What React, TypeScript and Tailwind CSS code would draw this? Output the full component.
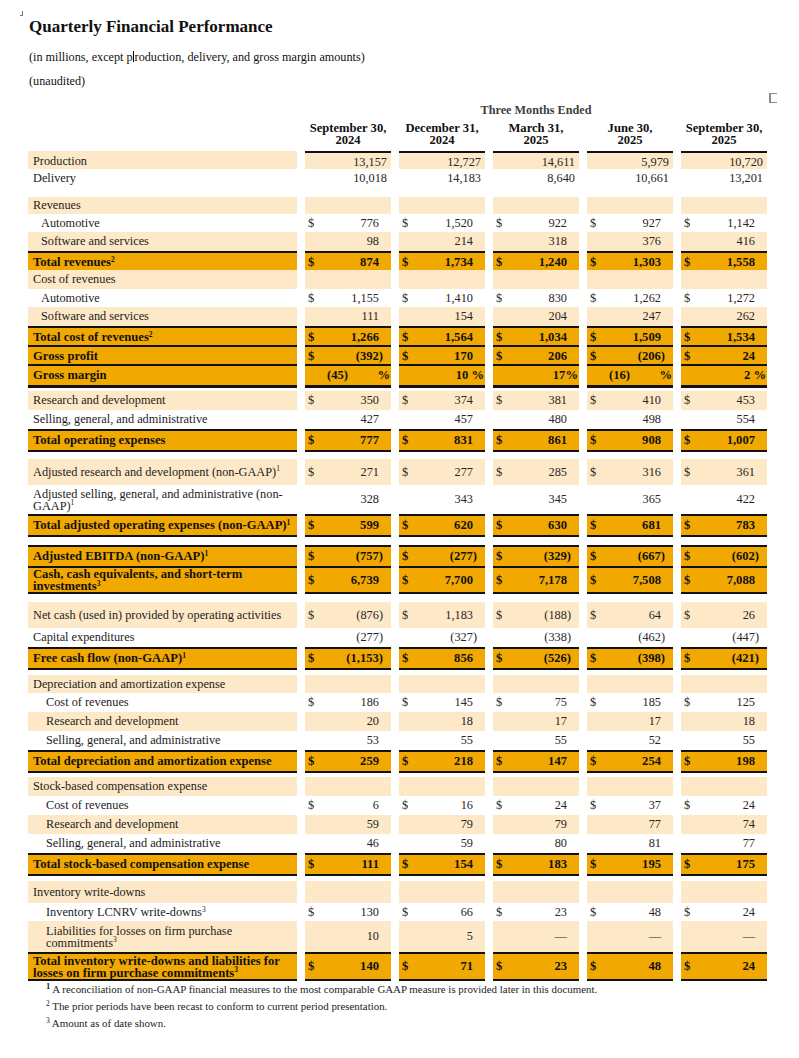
import React from "react"

type Line = {
    label: React.ReactNode
    kind: "light" | "plain" | "total"
    h: string
    ind?: "a" | "b"
    vals?: string[]
    usd?: boolean
    top?: boolean
    bottom?: "thin" | "thick"
    raw?: boolean
    pct?: boolean
    head?: boolean
    multi?: boolean
}

type Row = Line | { spacer: string }

const S = ({n}: { n: string }) => <sup className="text-[7.5px] leading-none top-[-0.6em]">{n}</sup>

const rows: Row[] = [
    {label: "Production", kind: "light", h: "h-[18px]", raw: true, head: true, vals: ["13,157", "12,727", "14,611", "5,979", "10,720"]},
    {label: "Delivery", kind: "plain", h: "h-[18px]", raw: true, vals: ["10,018", "14,183", "8,640", "10,661", "13,201"]},
    {spacer: "h-[10px]"},
    {label: "Revenues", kind: "light", h: "h-[17px]"},
    {label: "Automotive", ind: "a", kind: "plain", h: "h-[18px]", usd: true, vals: ["776", "1,520", "922", "927", "1,142"]},
    {label: "Software and services", ind: "a", kind: "light", h: "h-[19px]", vals: ["98", "214", "318", "376", "416"]},
    {label: <>Total revenues<S n="2"/></>, kind: "total", h: "h-[19px]", usd: true, top: true, bottom: "thin", vals: ["874", "1,734", "1,240", "1,303", "1,558"]},
    {label: "Cost of revenues", kind: "light", h: "h-[19px]"},
    {label: "Automotive", ind: "a", kind: "plain", h: "h-[18px]", usd: true, vals: ["1,155", "1,410", "830", "1,262", "1,272"]},
    {label: "Software and services", ind: "a", kind: "light", h: "h-[19px]", vals: ["111", "154", "204", "247", "262"]},
    {label: <>Total cost of revenues<S n="2"/></>, kind: "total", h: "h-[19px]", usd: true, top: true, vals: ["1,266", "1,564", "1,034", "1,509", "1,534"]},
    {label: "Gross profit", kind: "total", h: "h-[19px]", usd: true, top: true, vals: ["(392)", "170", "206", "(206)", "24"]},
    {label: "Gross margin", kind: "total", h: "h-[19px]", top: true, bottom: "thick", pct: true, vals: ["(45)", "10 %", "17%", "(16)", "2 %"]},
    {spacer: "h-[8px]"},
    {label: "Research and development", kind: "light", h: "h-[19px]", usd: true, vals: ["350", "374", "381", "410", "453"]},
    {label: "Selling, general, and administrative", kind: "plain", h: "h-[19px]", vals: ["427", "457", "480", "498", "554"]},
    {label: "Total operating expenses", kind: "total", h: "h-[20px]", usd: true, top: true, bottom: "thin", vals: ["777", "831", "861", "908", "1,007"]},
    {spacer: "h-[10px]"},
    {label: <>Adjusted research and development (non-GAAP)<S n="1"/></>, kind: "light", h: "h-[26px]", usd: true, vals: ["271", "277", "285", "316", "361"]},
    {label: <>Adjusted selling, general, and administrative (non-<br/>GAAP)<S n="1"/></>, multi: true, kind: "plain", h: "h-[29px]", vals: ["328", "343", "345", "365", "422"]},
    {label: <>Total adjusted operating expenses (non-GAAP)<S n="1"/></>, kind: "total", h: "h-[22px]", usd: true, top: true, bottom: "thin", vals: ["599", "620", "630", "681", "783"]},
    {spacer: "h-[9px]"},
    {label: <>Adjusted EBITDA (non-GAAP)<S n="1"/></>, kind: "total", h: "h-[21px]", usd: true, top: true, vals: ["(757)", "(277)", "(329)", "(667)", "(602)"]},
    {label: <>Cash, cash equivalents, and short-term<br/>investments<S n="3"/></>, multi: true, kind: "total", h: "h-[27px]", usd: true, top: true, bottom: "thin", vals: ["6,739", "7,700", "7,178", "7,508", "7,088"]},
    {spacer: "h-[9px]"},
    {label: "Net cash (used in) provided by operating activities", kind: "light", h: "h-[26px]", usd: true, vals: ["(876)", "1,183", "(188)", "64", "26"]},
    {label: "Capital expenditures", kind: "plain", h: "h-[19px]", vals: ["(277)", "(327)", "(338)", "(462)", "(447)"]},
    {label: <>Free cash flow (non-GAAP)<S n="1"/></>, kind: "total", h: "h-[20px]", usd: true, top: true, bottom: "thin", vals: ["(1,153)", "856", "(526)", "(398)", "(421)"]},
    {spacer: "h-[8px]"},
    {label: "Depreciation and amortization expense", kind: "light", h: "h-[18px]"},
    {label: "Cost of revenues", ind: "b", kind: "plain", h: "h-[19px]", usd: true, vals: ["186", "145", "75", "185", "125"]},
    {label: "Research and development", ind: "b", kind: "light", h: "h-[19px]", vals: ["20", "18", "17", "17", "18"]},
    {label: "Selling, general, and administrative", ind: "b", kind: "plain", h: "h-[19px]", vals: ["53", "55", "55", "52", "55"]},
    {label: "Total depreciation and amortization expense", kind: "total", h: "h-[20px]", usd: true, top: true, bottom: "thin", vals: ["259", "218", "147", "254", "198"]},
    {spacer: "h-[7px]"},
    {label: "Stock-based compensation expense", kind: "light", h: "h-[19px]"},
    {label: "Cost of revenues", ind: "b", kind: "plain", h: "h-[19px]", usd: true, vals: ["6", "16", "24", "37", "24"]},
    {label: "Research and development", ind: "b", kind: "light", h: "h-[19px]", vals: ["59", "79", "79", "77", "74"]},
    {label: "Selling, general, and administrative", ind: "b", kind: "plain", h: "h-[19px]", vals: ["46", "59", "80", "81", "77"]},
    {label: "Total stock-based compensation expense", kind: "total", h: "h-[21px]", usd: true, top: true, bottom: "thin", vals: ["111", "154", "183", "195", "175"]},
    {spacer: "h-[7px]"},
    {label: "Inventory write-downs", kind: "light", h: "h-[22px]"},
    {label: <>Inventory LCNRV write-downs<S n="3"/></>, ind: "b", kind: "plain", h: "h-[18px]", usd: true, vals: ["130", "66", "23", "48", "24"]},
    {label: <>Liabilities for losses on firm purchase<br/>commitments<S n="3"/></>, multi: true, ind: "b", kind: "light", h: "h-[31px]", vals: ["10", "5", "—", "—", "—"]},
    {label: <>Total inventory write-downs and liabilities for<br/>losses on firm purchase commitments<S n="3"/></>, multi: true, kind: "total", h: "h-[29px]", usd: true, top: true, bottom: "thin", vals: ["140", "71", "23", "48", "24"]},
]

const heads = [["September 30,", "2024"], ["December 31,", "2024"], ["March 31,", "2025"], ["June 30,", "2025"], ["September 30,", "2025"]]

function Num({v}: { v: string }) {
    if (v.startsWith("(")) {
        return <span className="whitespace-nowrap">{v.slice(0, -1)}<span className="inline-block mr-[-4px]">)</span></span>
    }
    return <span className="whitespace-nowrap">{v}</span>
}

function TableRow({r}: { r: Line }) {
    const bg = r.kind === "light" ? "bg-[#fde9c7]" : r.kind === "total" ? "bg-[#f1a800]" : "bg-white"
    const lines = `${r.top ? "border-t-2 border-t-[#111]" : ""} ${r.bottom === "thin" ? "border-b-2 border-b-[#111]" : r.bottom === "thick" ? "border-b-[3px] border-b-[#111]" : ""}`
    const weight = r.kind === "total" ? "font-bold text-[12.6px] text-[#111]" : "text-[12.3px] text-[#1c1c1c]"
    const pad = r.ind === "a" ? "pl-[13px]" : r.ind === "b" ? "pl-[18px]" : "pl-[5px]"

    return (
        <div className={`grid grid-cols-[269px_repeat(5,86px)] gap-x-[8px] ${r.h}`}>
            <div className={`${bg} ${lines} ${weight} ${pad} flex items-center ${r.multi ? "leading-[12px]" : "leading-none"} whitespace-nowrap`}>
                <span>{r.label}</span>
            </div>
            {[0, 1, 2, 3, 4].map(i => {
                const v = r.vals?.[i]
                const numColor = r.kind === "total" ? "text-[#111]" : "text-[#262626]"
                if (r.pct && v) {
                    if (v.startsWith("(")) {
                        return (
                            <div key={i} className={`${bg} ${lines} ${weight} ${numColor} flex items-center justify-between pl-[22px] pr-[1px]`}>
                                <span>{v}</span><span>%</span>
                            </div>
                        )
                    }
                    return (
                        <div key={i} className={`${bg} ${lines} ${weight} ${numColor} flex items-center justify-end pr-[1px] whitespace-pre`}>
                            {v}
                        </div>
                    )
                }
                return (
                    <div key={i}
                         className={`${bg} ${lines} ${r.head ? "border-t-2 border-t-[#111]" : ""} ${weight} ${numColor} flex items-center justify-between pl-[3px] ${r.raw ? "pr-[4px]" : "pr-[12px]"}`}>
                        <span>{r.usd ? "$" : ""}</span>
                        {v ? <Num v={v}/> : null}
                    </div>
                )
            })}
        </div>
    )
}

export default function App() {
    return (
        <div className="relative w-[799px] min-h-[1058px] bg-white font-['Liberation_Serif',serif] text-[#111] pl-[28px] pt-[17px]">
            <div className="absolute left-[20px] top-[11px] w-[3px] h-[5px] border-r border-b border-[#777]"/>
            <div className="absolute left-[769px] top-[93px] w-[8px] h-[10px] border-l-2 border-t border-b border-[#8a8a8a]"/>

            <div className="pl-[1px] h-[20px] leading-[20px] text-[17px] font-bold">Quarterly Financial Performance</div>
            <div className="pl-[1px] mt-[10px] h-[20px] leading-[20px] text-[12.2px]">
                (in millions, except p<span className="inline-block w-[1px] h-[11px] bg-black align-[-1px] mx-[0.5px]"/>roduction, delivery, and gross margin amounts)
            </div>
            <div className="pl-[1px] mt-[4px] h-[20px] leading-[20px] text-[12.2px]">(unaudited)</div>

            <div className="grid grid-cols-[269px_repeat(5,86px)] gap-x-[8px] mt-[12px] h-[14px]">
                <div/>
                <div className="col-span-5 text-center font-bold text-[12.2px] leading-[14px] text-[#3e3e3e]">Three Months Ended</div>
            </div>
            <div className="grid grid-cols-[269px_repeat(5,86px)] gap-x-[8px] mt-[6px] h-[28px]">
                <div/>
                {heads.map(([a, b]) => (
                    <div key={a + b} className="text-center font-bold text-[12.6px] leading-[11.5px] text-[#111] whitespace-nowrap">
                        <div>{a}</div>
                        <div>{b}</div>
                    </div>
                ))}
            </div>

            <div className="flex flex-col">
                {rows.map((r, i) => "spacer" in r
                    ? <div key={i} className={r.spacer}/>
                    : <TableRow key={i} r={r}/>)}
            </div>

            <div className="pl-[18px] text-[10.9px] leading-[17px] text-[#1c1c1c] whitespace-nowrap">
                <div><sup className="text-[8.5px] font-bold leading-none top-[-0.5em]">1</sup> A reconciliation of non-GAAP financial measures to the most comparable GAAP measure is provided later in this document.</div>
                <div><sup className="text-[7.5px] leading-none top-[-0.5em]">2</sup> The prior periods have been recast to conform to current period presentation.</div>
                <div><sup className="text-[7.5px] leading-none top-[-0.5em]">3</sup> Amount as of date shown.</div>
            </div>
        </div>
    )
}
